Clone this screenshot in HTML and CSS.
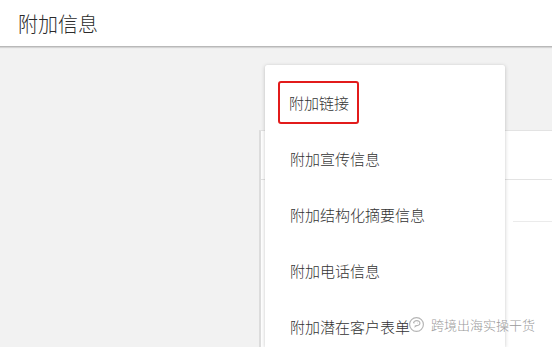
FILE: index.html
```html
<!DOCTYPE html>
<html lang="zh-CN">
<head>
    <meta charset="UTF-8">
    <title>附加信息</title>
    <link rel="stylesheet" href="styles.css">
</head>
<body>
    <header class="topbar">
        <h1 class="topbar-title">附加信息</h1>
    </header>

    <main class="content">
        <div class="card">
            <div class="card-row card-row-head"></div>
            <div class="card-row card-row-sub"></div>
            <div class="card-row"></div>
        </div>

        <ul class="menu">
            <li class="menu-item"><span class="menu-label selected">附加链接</span></li>
            <li class="menu-item"><span class="menu-label">附加宣传信息</span></li>
            <li class="menu-item"><span class="menu-label">附加结构化摘要信息</span></li>
            <li class="menu-item"><span class="menu-label">附加电话信息</span></li>
            <li class="menu-item"><span class="menu-label">附加潜在客户表单</span></li>
        </ul>

        <div class="watermark">
            <svg class="watermark-icon" viewBox="0 0 16 16" fill="none" stroke="#b5b5b5" stroke-width="1.1">
                <circle cx="8" cy="8" r="6.5" />
                <path d="M5.2 6.8a3 2.4 0 1 1 2.6 2.3l-1 .7.2-1" />
                <circle cx="6.3" cy="6.6" r=".4" fill="#b5b5b5" stroke="none" />
                <circle cx="9.1" cy="6.6" r=".4" fill="#b5b5b5" stroke="none" />
            </svg>
            <span class="watermark-text">跨境出海实操干货</span>
        </div>
    </main>
</body>
</html>
```

FILE: styles.css
```css
body {
    margin: 0;
    padding: 0;
    height: 347px;
    overflow: hidden;
    display: flex;
    flex-direction: column;
    font-family: "Noto Sans CJK SC", "Microsoft YaHei", sans-serif;
    background-color: #f2f2f2;
    color: #333;
}

.topbar {
    height: 46px;
    background: white;
    border-bottom: 1px solid #b9b9b9;
    box-shadow: 0 1px 1px rgba(0, 0, 0, 0.12);
    display: flex;
    align-items: center;
    padding-left: 18px;
    flex-shrink: 0;
}

.topbar-title {
    margin: 0;
    font-size: 20px;
    font-weight: 300;
    color: #2b2b2b;
}

.content {
    position: relative;
    flex: 1;
    overflow: hidden;
    padding: 83px 0 0 259px;
}

.card {
    height: 100%;
    background: white;
    border-left: 2px solid #dcdcdc;
    border-top: 1px solid #e3e3e3;
}

.card-row-head {
    height: 48px;
    border-bottom: 1px solid #e3e3e3;
}

.card-row-sub {
    height: 41px;
    margin-left: 252px;
    border-bottom: 1px solid #ebebeb;
}

.menu {
    position: absolute;
    left: 265px;
    top: 18px;
    bottom: 0;
    width: 240px;
    margin: 0;
    padding: 0;
    overflow: hidden;
    list-style: none;
    background: white;
    border-radius: 2px 2px 0 0;
    box-shadow: 0 1px 4px rgba(0, 0, 0, 0.2), 0 0 1px rgba(0, 0, 0, 0.1);
}

.menu-item {
    height: 56px;
    display: flex;
    align-items: center;
    padding-left: 13px;
}

.menu-item:first-child {
    margin-top: 9px;
}

.menu-label {
    font-size: 15px;
    font-weight: 300;
    color: #333;
    padding: 10px;
    border: 2px solid transparent;
}

.menu-label.selected {
    border-color: #e21b1b;
    border-radius: 3px;
    padding: 9px 8px 9px 9px;
}

.watermark {
    position: absolute;
    left: 408px;
    top: 268px;
    display: flex;
    align-items: center;
    gap: 6px;
}

.watermark-icon {
    width: 17px;
    height: 17px;
}

.watermark-text {
    font-size: 13px;
    font-weight: 300;
    color: #9a9a9a;
    text-shadow: 0 0 1px white, 0 0 2px white;
}
```
